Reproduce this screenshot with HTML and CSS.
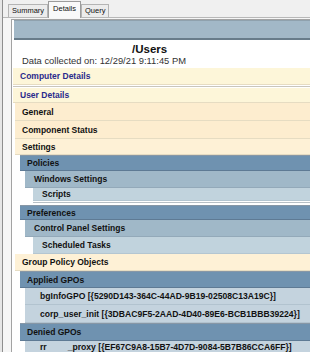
FILE: index.html
```html
<!DOCTYPE html>
<html lang="en">
<head>
    <meta charset="UTF-8">
    <meta name="viewport" content="width=device-width, initial-scale=1.0">
    <title>Details</title>
    <link rel="stylesheet" href="styles.css">
</head>
<body>
    <div class="window">
        <div class="tabs">
            <div class="tab">Summary</div>
            <div class="tab active">Details</div>
            <div class="tab">Query</div>
        </div>
        <div class="tab-page">
            <div class="report">
                <div class="report-bar"></div>
                <div class="report-title">/Users</div>
                <div class="report-date">Data collected on: 12/29/21 9:11:45 PM</div>

                <div class="he0">Computer Details</div>
                <div class="he0-sep"></div>
                <div class="he0 short">User Details</div>

                <div class="he1 tall">General</div>
                <div class="he1 tall">Component Status</div>
                <div class="he1 light mid">Settings</div>

                <div class="he2 mid">Policies</div>
                <div class="he3">Windows Settings</div>
                <div class="he4 tiny">Scripts</div>
                <div class="he-sep"></div>

                <div class="he2 short">Preferences</div>
                <div class="he3">Control Panel Settings</div>
                <div class="he4">Scheduled Tasks</div>

                <div class="he1 light">Group Policy Objects</div>
                <div class="he2">Applied GPOs</div>
                <div class="gpo">bgInfoGPO [{5290D143-364C-44AD-9B19-02508C13A19C}]</div>
                <div class="gpo tall">corp_user_init [{3DBAC9F5-2AAD-4D40-89E6-BCB1BBB39224}]</div>
                <div class="he2 tall">Denied GPOs</div>
                <div class="gpo last">rr<span class="blank"></span>_proxy [{EF67C9A8-15B7-4D7D-9084-5B7B86CCA6FF}]</div>
            </div>
        </div>
    </div>
</body>
</html>
```

FILE: styles.css
```css
*,
*:before,
*:after {
    margin: 0;
    padding: 0;
    box-sizing: border-box;
}

body {
    background-color: #e6e6e6;
    font-family: "Liberation Sans", Arial, sans-serif;
    height: 352px;
    overflow: hidden;
}

.window {
    margin-left: 2px;
    height: 352px;
    border-left: 1px solid #8e8e8e;
    background-color: #f0f0f0;
}

/* tab strip */

.tabs {
    display: flex;
    align-items: flex-end;
    height: 17px;
    padding-left: 5px;
}

.tab {
    height: 13px;
    padding: 0 3px;
    border: 1px solid #b4b4b4;
    border-bottom: 0;
    background-color: #ececec;
    font-size: 7.5px;
    line-height: 12px;
    color: #111;
}

.tab.active {
    position: relative;
    z-index: 1;
    height: 17px;
    margin-bottom: -1px;
    padding: 0 4px;
    border-color: #9c9c9c;
    background-color: #f9f9f9;
    line-height: 14px;
}

.tab-page {
    height: 335px;
    padding: 1px 0 0 8px;
    border-top: 1px solid #b8b8b8;
    background-color: #f6f6f6;
}

/* report frame */

.report {
    height: 100%;
    padding-left: 1px;
    border-left: 1px solid #a3a3a3;
    border-top: 1px solid #a3a3a3;
    background-color: #fff;
    overflow: hidden;
}

.report-bar {
    height: 20px;
    margin-left: 1px;
    border-top: 1px solid #8fa1ad;
    border-bottom: 2px solid #687c8a;
    background-color: #a2b8c7;
}

.report-title {
    height: 15px;
    padding: 3px 0 0 119px;
    font-size: 11.5px;
    line-height: 12px;
    font-weight: bold;
    color: #111;
}

.report-date {
    height: 13px;
    padding: 0 0 0 9px;
    font-size: 9.4px;
    line-height: 12px;
    color: #333;
}

/* section headers */

.he0,
.he1,
.he2,
.he3,
.he4,
.gpo {
    display: flex;
    align-items: center;
    height: 17px;
    padding-left: 7px;
    border-bottom: 1px solid #e6dcc2;
    font-size: 8.5px;
    font-weight: bold;
    color: #111;
    white-space: nowrap;
}

.he0 {
    background-color: #fdf6d9;
    color: #2a2a8c;
}

.he0-sep {
    height: 3px;
    border-top: 1px solid #fff;
    border-bottom: 1px solid #fff;
    background-color: #c9c6bc;
}

.he1 {
    margin-left: 2px;
    background-color: #fdedcf;
}

.he1.light {
    background-color: #fef1d6;
}

.he2 {
    margin-left: 7px;
    border-top: 1px solid #8797a6;
    border-bottom: 1px solid #5e7a94;
    background-color: #6f92b0;
}

.he3 {
    margin-left: 12px;
    padding-left: 9px;
    border-bottom: 1px solid #93a9b9;
    background-color: #a0b8c8;
}

.he4 {
    margin-left: 20px;
    padding-left: 9px;
    border-bottom: 1px solid #b4c6d1;
    background-color: #c1d3dd;
}

.he-sep {
    height: 4px;
    margin-left: 20px;
    border-top: 1px solid #fff;
    border-bottom: 2px solid #fff;
    background-color: #b7bfc5;
}

.gpo {
    margin-left: 12px;
    padding-left: 15px;
    border-bottom: 1px solid #b2c3cf;
    background-color: #c4d3de;
    font-size: 8.6px;
}

.gpo.last {
    align-items: flex-start;
    height: 11px;
    padding-top: 1px;
    border-bottom: 0;
    line-height: 10px;
}

.short {
    height: 15px;
}

.mid {
    height: 16px;
}

.tall {
    height: 18px;
}

.tiny {
    height: 13px;
}

.blank {
    display: inline-block;
    width: 21px;
}
```
